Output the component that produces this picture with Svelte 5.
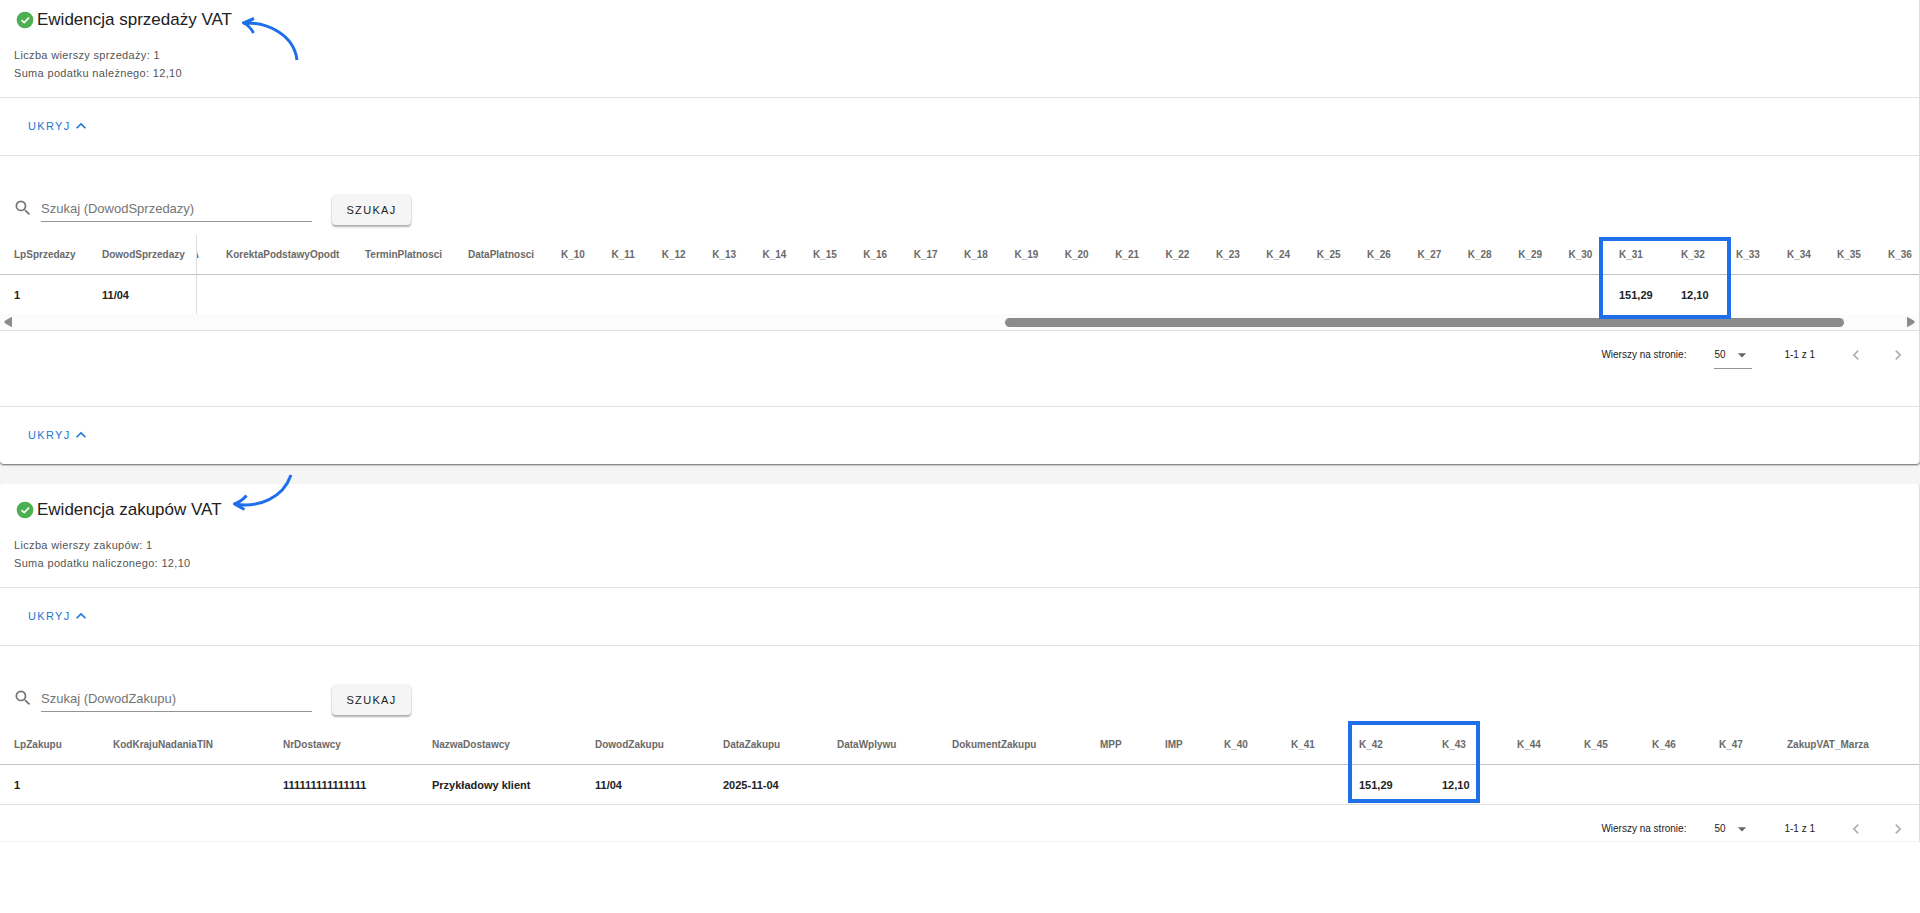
<script lang="ts">
  type Column = { name: string; width?: number; value?: string; marked?: boolean };

  const ICONS = {
    magnify:
      "M9.5,3A6.5,6.5 0 0,1 16,9.5C16,11.11 15.41,12.59 14.44,13.73L14.71,14H15.5L20.5,19L19,20.5L14,15.5V14.71L13.73,14.44C12.59,15.41 11.11,16 9.5,16A6.5,6.5 0 0,1 3,9.5A6.5,6.5 0 0,1 9.5,3M9.5,5C7,5 5,7 5,9.5C5,12 7,14 9.5,14C12,14 14,12 14,9.5C14,7 12,5 9.5,5Z",
    up: "M7.41,15.41L12,10.83L16.59,15.41L18,14L12,8L6,14L7.41,15.41Z",
    left: "M15.41,16.58L10.83,12L15.41,7.41L14,6L8,12L14,18L15.41,16.58Z",
    right: "M8.59,16.58L13.17,12L8.59,7.41L10,6L16,12L10,18L8.59,16.58Z",
    caret: "M7,10L12,15L17,10H7Z",
  };

  // K_10 to K_30 have no width and share what is left of the table
  function range(from: number, to: number): Column[] {
    const cols: Column[] = [];
    for (let i = from; i <= to; i++) cols.push({ name: `K_${i}` });
    return cols;
  }

  const salesColumns: Column[] = [
    { name: "LpSprzedazy", width: 88, value: "1" },
    { name: "DowodSprzedazy", width: 109, value: "11/04" },
    { name: "A", width: 15 },
    { name: "KorektaPodstawyOpodt", width: 139 },
    { name: "TerminPlatnosci", width: 103 },
    { name: "DataPlatnosci", width: 93 },
    ...range(10, 30),
    { name: "K_31", width: 62, value: "151,29", marked: true },
    { name: "K_32", width: 55, value: "12,10" },
    { name: "K_33", width: 51 },
    { name: "K_34", width: 50 },
    { name: "K_35", width: 51 },
    { name: "K_36", width: 45 },
  ];

  const purchaseColumns: Column[] = [
    { name: "LpZakupu", width: 99, value: "1" },
    { name: "KodKrajuNadaniaTIN", width: 170 },
    { name: "NrDostawcy", width: 149, value: "111111111111111" },
    { name: "NazwaDostawcy", width: 163, value: "Przykładowy klient" },
    { name: "DowodZakupu", width: 128, value: "11/04" },
    { name: "DataZakupu", width: 114, value: "2025-11-04" },
    { name: "DataWplywu", width: 115 },
    { name: "DokumentZakupu", width: 148 },
    { name: "MPP", width: 65 },
    { name: "IMP", width: 59 },
    { name: "K_40", width: 67 },
    { name: "K_41", width: 68 },
    { name: "K_42", width: 83, value: "151,29", marked: true },
    { name: "K_43", width: 75, value: "12,10" },
    { name: "K_44", width: 67 },
    { name: "K_45", width: 68 },
    { name: "K_46", width: 67 },
    { name: "K_47", width: 68 },
    { name: "ZakupVAT_Marza" },
  ];

  const scroll = { start: 52.4, size: 44.5 };

  let salesQuery = $state("");
  let purchaseQuery = $state("");
</script>

{#snippet icon(path: string, size: number)}
  <svg width={size} height={size} viewBox="0 0 24 24" aria-hidden="true"><path d={path} fill="currentColor" /></svg>
{/snippet}

{#snippet okIcon()}
  <svg class="ok" width="20" height="20" viewBox="0 0 24 24" aria-hidden="true">
    <circle cx="12" cy="12" r="10" />
    <path d="M7.8 12.2L11 15.2L16.8 9.2" />
  </svg>
{/snippet}

{#snippet toggle()}
  <div class="toggle">
    <button type="button" class="link">UKRYJ {@render icon(ICONS.up, 20)}</button>
  </div>
{/snippet}

{#snippet pager(id: string)}
  <label for={id}>Wierszy na stronie:</label>
  <span class="select">
    <select {id}><option>50</option></select>
    {@render icon(ICONS.caret, 20)}
  </span>
  <span class="count">1-1 z 1</span>
  <button type="button" class="page" aria-label="Poprzednia strona" disabled>{@render icon(ICONS.left, 20)}</button>
  <button type="button" class="page" aria-label="Następna strona" disabled>{@render icon(ICONS.right, 20)}</button>
{/snippet}

{#snippet grid(columns: Column[])}
  <table>
    <colgroup>
      {#each columns as c}
        <col style={c.width ? `width: ${c.width}px` : undefined} />
      {/each}
    </colgroup>
    <thead>
      <tr>
        {#each columns as c}
          <th class:marked={c.marked} scope="col"><span>{c.name}</span>{#if c.marked}<i class="mark"></i>{/if}</th>
        {/each}
      </tr>
    </thead>
    <tbody>
      <tr>
        {#each columns as c}
          <td>{c.value ?? ""}</td>
        {/each}
      </tr>
    </tbody>
  </table>
{/snippet}

<main>
  <section class="card sales">
    <header>
      <h2>
        {@render okIcon()}Ewidencja sprzedaży VAT
        <svg class="arrow" width="62" height="48" viewBox="0 0 62 48" aria-hidden="true">
          <path d="M4 10C28 9 54 22 57 47M14 5.5L3.5 10Q10 13 13.5 20" />
        </svg>
      </h2>
      <p>Liczba wierszy sprzedaży: 1</p>
      <p>Suma podatku należnego: 12,10</p>
    </header>
    {@render toggle()}
    <form class="search">
      {@render icon(ICONS.magnify, 20)}
      <input type="text" aria-label="Szukaj (DowodSprzedazy)" placeholder="Szukaj (DowodSprzedazy)" bind:value={salesQuery} />
      <button type="button">SZUKAJ</button>
    </form>
    {@render grid(salesColumns)}
    <div class="scrollbar">
      <svg width="16" height="16" viewBox="0 0 16 16" aria-hidden="true"><path d="M12 4V12Q12 13.5 10.5 12.5L5 9.2Q3.5 8 5 6.8L10.5 3.5Q12 2.5 12 4Z" /></svg>
      <div class="track">
        <div class="thumb" style="margin-left: {scroll.start}%; width: {scroll.size}%"></div>
      </div>
      <svg width="16" height="16" viewBox="0 0 16 16" aria-hidden="true"><path d="M4 4V12Q4 13.5 5.5 12.5L11 9.2Q12.5 8 11 6.8L5.5 3.5Q4 2.5 4 4Z" /></svg>
    </div>
    <div class="footer">{@render pager("sales-rows")}</div>
    {@render toggle()}
  </section>

  <section class="card purchases">
    <header>
      <h2>
        {@render okIcon()}Ewidencja zakupów VAT
        <svg class="arrow" width="64" height="48" viewBox="0 0 64 48" aria-hidden="true">
          <path d="M4 32C28 36 52 26 60 3M15.5 23.5Q11 29 3.5 32L13.5 37.5" />
        </svg>
      </h2>
      <p>Liczba wierszy zakupów: 1</p>
      <p>Suma podatku naliczonego: 12,10</p>
    </header>
    {@render toggle()}
    <form class="search">
      {@render icon(ICONS.magnify, 20)}
      <input type="text" aria-label="Szukaj (DowodZakupu)" placeholder="Szukaj (DowodZakupu)" bind:value={purchaseQuery} />
      <button type="button">SZUKAJ</button>
    </form>
    {@render grid(purchaseColumns)}
    <div class="footer">{@render pager("purchase-rows")}</div>
  </section>
</main>

<style>
  :global(body) {
    background: #fff;
    font-family: "Liberation Sans", Arial, sans-serif;
  }

  main {
    display: flex;
    flex-direction: column;
    gap: 20px;
    background: #f5f5f5;
  }

  svg {
    display: block;
    flex: none;
  }

  button {
    font-family: inherit;
    cursor: pointer;
  }

  .card {
    background: #fff;
    border-right: 1px solid #ddd;
  }

  .sales {
    border-radius: 0 0 4px 4px;
    box-shadow: 0 1px 2px rgba(0, 0, 0, 0.6);
  }

  .purchases {
    border-radius: 4px 4px 0 0;
    border-bottom: 1px solid #f3f3f3;
  }

  header {
    padding: 8px 14px 15px;
  }

  .purchases header {
    padding-top: 14px;
  }

  h2 {
    display: flex;
    align-items: center;
    margin: 0 0 14px;
    font-size: 17px;
    font-weight: 400;
    line-height: 24px;
    color: #212121;
    position: relative;
  }

  .ok {
    margin: 0 2px 0 1px;
    fill: #4caf50;
  }

  .ok path {
    fill: none;
    stroke: #fff;
    stroke-width: 2;
  }

  .arrow {
    position: absolute;
    top: 5px;
    left: 226px;
    fill: none;
    stroke: #1f6feb;
    stroke-width: 3;
    stroke-linejoin: round;
  }

  .purchases .arrow {
    top: -26px;
    left: 217px;
  }

  header p {
    margin: 0;
    font-size: 11px;
    line-height: 18px;
    letter-spacing: 0.03em;
    color: #555;
  }

  .toggle {
    display: flex;
    align-items: center;
    height: 55px;
    padding: 0 28px 2px;
    border-top: 1px solid #e2e2e2;
  }

  .link {
    display: flex;
    align-items: center;
    gap: 1px;
    padding: 0;
    border: 0;
    background: none;
    color: #1976d2;
    font-size: 11px;
    letter-spacing: 0.12em;
  }

  .search {
    display: flex;
    align-items: flex-start;
    padding: 39px 13px 10px;
    border-top: 1px solid #e2e2e2;
    color: #757575;
  }

  .search svg {
    margin-top: 3px;
  }

  .search input {
    width: 271px;
    height: 27px;
    margin: 0 20px 0 8px;
    padding: 0;
    box-sizing: border-box;
    border: 0;
    border-bottom: 1px solid #949494;
    background: none;
    font-family: inherit;
    font-size: 13px;
    color: #212121;
  }

  .search input::placeholder {
    color: #757575;
    opacity: 1;
  }

  .search button {
    width: 79px;
    height: 30px;
    padding: 0;
    border: 0;
    border-radius: 4px;
    background: #f5f5f5;
    box-shadow: 0 2px 2px rgba(0, 0, 0, 0.3), 0 0 2px rgba(0, 0, 0, 0.12);
    color: #212121;
    font-size: 11px;
    letter-spacing: 0.12em;
  }

  table {
    width: 100%;
    table-layout: fixed;
    border-collapse: separate;
    border-spacing: 0;
  }

  th,
  td {
    height: 39px;
    padding: 0 0 0 14px;
    text-align: left;
    white-space: nowrap;
  }

  th {
    border-bottom: 1px solid #c4c4c4;
    font-size: 10px;
    font-weight: 700;
    color: #6a6a6a;
  }

  td {
    font-size: 11px;
    font-weight: 700;
    color: #222;
  }

  /* the two frozen columns; the next one is scrolled under them */
  .sales th:nth-child(2),
  .sales td:nth-child(2) {
    border-right: 1px solid #ddd;
  }

  .sales th:nth-child(3) {
    padding: 0;
  }

  .sales th:nth-child(3) span {
    display: flex;
    justify-content: flex-end;
    width: 2px;
    overflow: hidden;
  }

  .marked {
    position: relative;
  }

  .mark {
    position: absolute;
    top: 2px;
    left: -6px;
    width: 132px;
    height: 82px;
    box-sizing: border-box;
    border: 4px solid #1f6feb;
    z-index: 1;
    pointer-events: none;
  }

  .purchases .mark {
    top: -4px;
    left: 3px;
  }

  .scrollbar {
    display: flex;
    align-items: center;
    height: 16px;
    background: #fcfcfc;
    fill: #8b8b8b;
  }

  .track {
    flex: 1;
  }

  .thumb {
    height: 9px;
    border-radius: 5px;
    background: #8b8b8b;
  }

  .footer {
    display: flex;
    align-items: flex-start;
    justify-content: flex-end;
    height: 75px;
    padding-right: 11px;
    border-top: 1px solid #e0e0e0;
    font-size: 10px;
    color: #212121;
  }

  .purchases .footer {
    height: 36px;
    overflow: hidden;
  }

  .footer > :global(*) {
    height: 28px;
    line-height: 28px;
    margin-top: 10px;
    box-sizing: border-box;
  }

  .select {
    display: flex;
    align-items: center;
    width: 38px;
    margin-left: 28px;
    border-bottom: 1px solid #949494;
    color: #666;
  }

  .select select {
    appearance: none;
    width: 18px;
    margin: 0;
    padding: 0;
    border: 0;
    background: none;
    font-family: inherit;
    font-size: 10px;
    color: #212121;
  }

  .count {
    margin-left: 32px;
    margin-right: 30px;
  }

  .page {
    display: flex;
    align-items: center;
    justify-content: center;
    width: 22px;
    padding: 0;
    border: 0;
    background: none;
    color: #b0b0b0;
  }

  .page + .page {
    width: 20px;
    margin-left: 21px;
  }
</style>
